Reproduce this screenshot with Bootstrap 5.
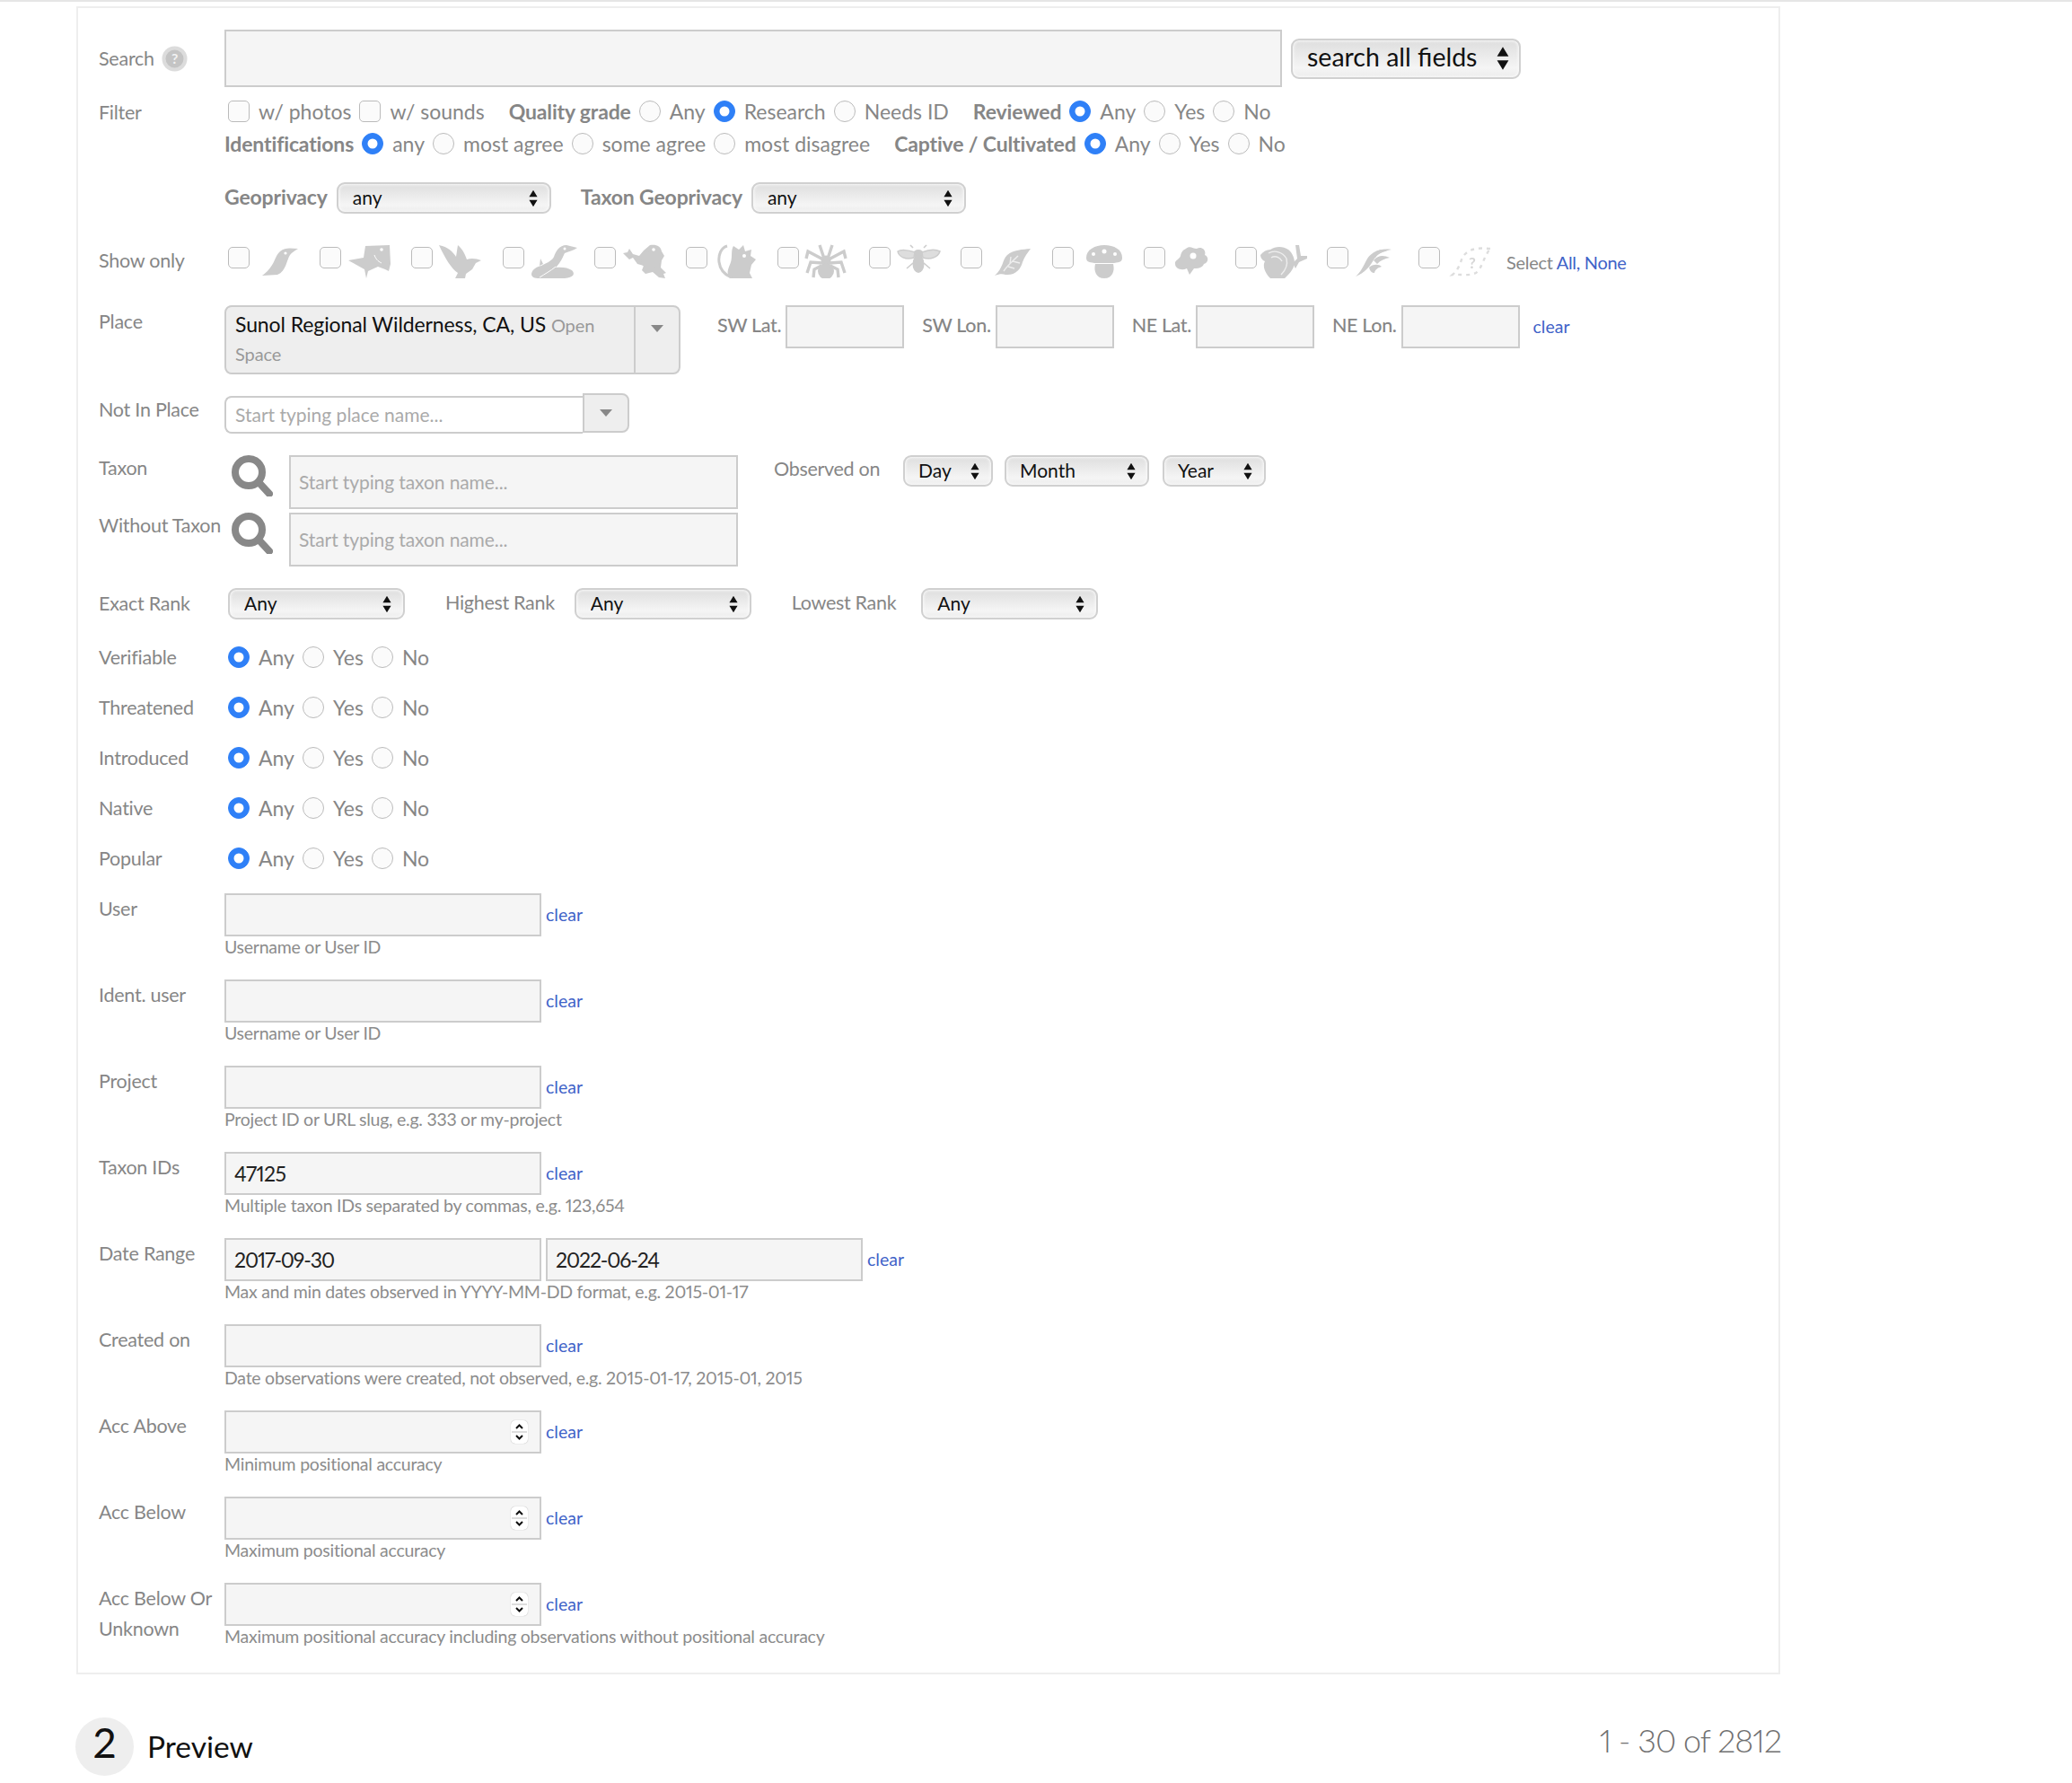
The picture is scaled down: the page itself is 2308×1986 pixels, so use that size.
<!DOCTYPE html>
<html lang="en">
<head>
    <meta charset="UTF-8">
    <title>Identify - Filters</title>
    <link href="https://cdn.jsdelivr.net/npm/bootstrap@5.3.0/dist/css/bootstrap.min.css" rel="stylesheet">
    <style>
        body {
            font-family: "Lato", "Liberation Sans", sans-serif;
            font-size: 23px;
            font-variant-numeric: proportional-nums;
            font-variant-ligatures: none;
            color: #868686;
            background: #fff;
            border-top: 2px solid #e6e6e6;
        }
        .filter-panel {
            width: 1898px;
            height: 1858px;
            margin: 5px 0 0 85px;
            border: 2px solid #eee;
            padding: 24px 0 0 23px;
        }
        .fld-lab { width: 140px; flex: none; font-size: 21.5px; line-height: 36px; letter-spacing: -.25px; }
        .wide-lab { width: 144px; }
        .txt-in {
            height: 48px;
            width: 132px;
            background: #f5f5f5;
            border: 2px solid #ccc;
            border-radius: 0;
            padding: 0 9px;
            font-size: 23px;
            color: #222;
            box-shadow: none;
            font-variant-numeric: proportional-nums;
        }
        .txt-in::placeholder { color: #aaa; font-size: 21px; letter-spacing: -.1px; }
        .id-val { letter-spacing: -.6px; }
        .date-val { letter-spacing: -1.1px; }
        .search-main { width: 1178px; height: 64px; }
        .sel-in {
            height: 35px;
            width: 197px;
            padding: 0 0 2px 16px;
            font-size: 21px;
            line-height: 29px;
            color: #111;
            border: 2px solid #d0d0d0;
            border-radius: 9px;
            background-color: #ececec;
            background-image: url("data:image/svg+xml,%3Csvg xmlns='http://www.w3.org/2000/svg' viewBox='0 0 12 24'%3E%3Cpath d='M6 1l5.5 9H.5zM6 23l-5.500-9h11z' fill='%23111'/%3E%3C/svg%3E"), linear-gradient(#dedede, #f5f5f5 75%, #ececec);
            background-repeat: no-repeat;
            background-position: right 13px center, 0 0;
            background-size: 10px 20px, 100% 100%;
            box-shadow: inset 0 0 3px 1px #fafafa;
        }
        .sel-big { width: 256px; height: 45px; margin-left: 10px; font-size: 28.5px; line-height: 37px; padding-bottom: 4px; background-position: right 11px center, 0 0; background-size: 14px 28px, 100% 100%; }
        .sel-geo { width: 239px; }
        .bold-lab { font-weight: 700; font-size: 23px; letter-spacing: -.15px; }
        .group-gap { margin-left: 18px; }
        .form-check-input.opt-in {
            width: 24px;
            height: 24px;
            margin: 0 10px 0 0;
            flex: none;
            border: 1px solid #bbb;
            background-color: #fbfbfb;
        }
        .form-check-input.opt-in[type=checkbox] { border-radius: 5px; }
        .form-check-input.opt-in:checked { background-color: #2f80f7; border-color: #2f80f7; }
        .form-check-input.first-check { margin-left: 4px; }
        .opt-txt { margin-right: 9px; white-space: nowrap; }
        .line-36 { height: 36px; }
        .filter-line-wrap { margin-top: 10px; }
        .line-36 { position: relative; top: -1px; }
        .geo-row { margin-top: 24px; height: 35px; padding-left: 140px; }
        .geo-row .sel-geo { margin-left: 10px; }
        .geo-row .bold-lab { position: relative; top: -1px; }
        .geo-second { margin-left: 33px; }
        .show-row { margin-top: 34px; height: 38px; }
        .show-list { margin-left: 4px; }
        .show-cell { width: 102px; flex: none; display: flex; }
        .show-cell .form-check-input.opt-in { margin: 3px 4px 0 0; }
        .show-cell svg { width: 62px; height: 38px; filter: blur(.5px); }
        .show-lab { margin-top: -3px; }
        .sel-links { font-size: 20px; margin: 1px 0 0 -4px; white-space: nowrap; letter-spacing: -.3px; }
        a { color: #3f63c8; text-decoration: none; }
        .place-row { margin-top: 30px; height: 77px; }
        .place-box {
            width: 508px;
            height: 77px;
            background: #eee;
            border: 2px solid #ccc;
            border-radius: 8px;
        }
        .place-txt { width: 456px; padding: 4px 0 0 10px; line-height: 31px; color: #111; border-right: 2px solid #ccc; letter-spacing: -.1px; }
        .place-txt small { color: #999; font-size: 20px; }
        .caret-mark { width: 0; height: 0; border-left: 7px solid transparent; border-right: 7px solid transparent; border-top: 8px solid #888; }
        .caret-cell { flex: 1; padding-top: 20px; }
        .coord-lab { margin: -1px 5px 0 20px; line-height: 46px; font-size: 21.5px; font-weight: 500; letter-spacing: -.35px; }
        .coord-lab.first { margin-left: 41px; }
        .not-row { margin-top: 21px; height: 45px; }
        .not-in {
            width: 399px;
            height: 42px;
            margin-top: 3px;
            padding: 0 10px 2px;
            background: #fff;
            border: 2px solid #ccc;
            border-right: 0;
            border-radius: 8px 0 0 8px;
            font-size: 21px;
        }
        .not-in::placeholder { color: #aaa; }
        .not-btn { width: 52px; height: 44px; background: #eee; border: 2px solid #ccc; border-radius: 0 8px 8px 0; }
        .taxon-wrap { margin-top: 24px; height: 125px; }
        .taxon-line { height: 61px; margin-bottom: 3px; }
        .taxon-line .fld-lab { margin-top: -4px; }
        .taxon-line svg { width: 46px; height: 46px; margin: 0 0 0 8px; flex: none; }
        .taxon-in { width: 500px; height: 60px; margin-left: 18px; padding-bottom: 2px; }
        .obs-block { margin-left: 40px; height: 35px; }
        .obs-block .sel-in { padding-left: 15px; }
        .obs-lab { width: 144px; font-size: 21.5px; letter-spacing: -.3px; position: relative; top: -2px; }
        .w-day { width: 100px; }
        .w-month { width: 161px; margin-left: 13px; }
        .w-year { width: 115px; margin-left: 15px; }
        .rank-row { margin-top: 23px; height: 35px; }
        .rank-gap { margin: -2px 22px 0 45px; font-size: 21.5px; letter-spacing: -.3px; }
        .rank-gap-low { margin-right: 28px; }
        .rank-row .fld-lab { margin-top: -2px; }
        .radio-first { margin-top: 14px; }
        .radio-row { height: 56px; }
        .radio-row > .fld-lab { width: 144px; }
        .inputs-first { margin-top: 11px; }
        .text-row { height: 96px; }
        .text-row .txt-in { width: 353px; }
        .text-row .fld-lab { line-height: 34px; }
        .date-end { margin-left: 5px; }
        .clear-lnk { margin-left: 5px; font-size: 19.5px; line-height: 47px; }
        .clear-lnk.place-clear { margin-left: 15px; }
        .help-txt { font-size: 19.5px; line-height: 24px; color: #8c8c8c; white-space: nowrap; letter-spacing: -.25px; }
        .spin-wrap { position: relative; }
        .spin-mark { position: absolute; right: 15px; top: 11px; width: 19px; height: 26px; background: #fff; border-radius: 5px; box-shadow: 0 0 1px #999; line-height: 0; }
        .preview-row { width: 1900px; margin: 48px 0 0 84px; height: 65px; }
        .step-num { width: 65px; height: 65px; border-radius: 50%; background: #eee; color: #111; font-size: 46px; line-height: 56px; text-align: center; }
        .step-name { font-size: 33.5px; color: #111; margin-left: 15px; }
        .count-txt { font-size: 36px; font-weight: 300; color: #707070; margin-top: -15px; letter-spacing: -1px; }
    </style>
</head>
<body>
    <div class="filter-panel">
        <!-- search -->
        <div class="d-flex align-items-center">
            <div class="fld-lab d-flex align-items-center gap-2">Search
                <svg width="29" height="29" viewBox="0 0 29 29"><circle cx="14.5" cy="14.5" r="14" fill="#dcdcdc"/><circle cx="14.5" cy="14.500" r="10" fill="#c4c4c4"/><text x="14.500" y="20" font-size="16" font-weight="700" text-anchor="middle" fill="#f2f2f2">?</text></svg>
            </div>
            <input class="form-control txt-in search-main">
            <select class="form-select sel-in sel-big"><option>search all fields</option></select>
        </div>

        <!-- filter -->
        <div class="d-flex filter-line-wrap">
            <div class="fld-lab">Filter</div>
            <div>
                <div class="d-flex align-items-center line-36">
                    <input class="form-check-input opt-in first-check" type="checkbox"><span class="opt-txt">w/ photos</span>
                    <input class="form-check-input opt-in" type="checkbox"><span class="opt-txt">w/ sounds</span>
                    <span class="opt-txt bold-lab group-gap">Quality grade</span>
                    <input class="form-check-input opt-in" type="radio" name="qg"><span class="opt-txt">Any</span>
                    <input class="form-check-input opt-in" type="radio" name="qg" checked><span class="opt-txt">Research</span>
                    <input class="form-check-input opt-in" type="radio" name="qg"><span class="opt-txt">Needs ID</span>
                    <span class="opt-txt bold-lab group-gap">Reviewed</span>
                    <input class="form-check-input opt-in" type="radio" name="rv" checked><span class="opt-txt">Any</span>
                    <input class="form-check-input opt-in" type="radio" name="rv"><span class="opt-txt">Yes</span>
                    <input class="form-check-input opt-in" type="radio" name="rv"><span class="opt-txt">No</span>
                </div>
                <div class="d-flex align-items-center line-36">
                    <span class="opt-txt bold-lab">Identifications</span>
                    <input class="form-check-input opt-in" type="radio" name="ids" checked><span class="opt-txt">any</span>
                    <input class="form-check-input opt-in" type="radio" name="ids"><span class="opt-txt">most agree</span>
                    <input class="form-check-input opt-in" type="radio" name="ids"><span class="opt-txt">some agree</span>
                    <input class="form-check-input opt-in" type="radio" name="ids"><span class="opt-txt">most disagree</span>
                    <span class="opt-txt bold-lab group-gap">Captive / Cultivated</span>
                    <input class="form-check-input opt-in" type="radio" name="cc" checked><span class="opt-txt">Any</span>
                    <input class="form-check-input opt-in" type="radio" name="cc"><span class="opt-txt">Yes</span>
                    <input class="form-check-input opt-in" type="radio" name="cc"><span class="opt-txt">No</span>
                </div>
            </div>
        </div>

        <div class="d-flex align-items-center geo-row">
            <span class="bold-lab">Geoprivacy</span>
            <select class="form-select sel-in sel-geo"><option>any</option></select>
            <span class="bold-lab geo-second">Taxon Geoprivacy</span>
            <select class="form-select sel-in sel-geo"><option>any</option></select>
        </div>

        <!-- show only -->
        <div class="d-flex align-items-center show-row">
            <div class="fld-lab show-lab">Show only</div>
            <div class="d-flex show-list">
                <div class="show-cell"><input class="form-check-input opt-in" type="checkbox">
                    <svg viewBox="-3 0 62 38" fill="#ccc"><path d="M47 5C40 5 33 3 27 8 20 14 22 24 7 35L24 34C34 30 34 18 38 12 40 9 44 7 47 5Z"/><circle cx="33" cy="10" r="1.6" fill="#fff"/></svg></div>
                <div class="show-cell"><input class="form-check-input opt-in" type="checkbox">
                    <svg viewBox="-3 0 62 38" fill="#ccc"><path d="M20 2L47 1 48 22 46 30 42 28 34 25 23 30 21 38 19 28 1 18 18 15Z"/><circle cx="38" cy="6" r="1.8" fill="#fff"/><path d="M30 12C32 18 36 20 38 21" stroke="#fff" fill="none"/></svg></div>
                <div class="show-cell"><input class="form-check-input opt-in" type="checkbox">
                    <svg viewBox="-3 0 62 38" fill="#ccc"><path d="M0 1C10 3 15 8 19 14L21 1C27 6 29 12 31 17 36 15 42 16 47 18L41 21 37 28 30 33 29 38 18 38 21 32C14 28 6 14 0 1Z"/></svg></div>
                <div class="show-cell"><input class="form-check-input opt-in" type="checkbox">
                    <svg viewBox="-3 0 62 38" fill="#ccc"><path d="M52 4L40 1C32 1 28 8 26 14 24 18 20 20 12 24 4 26 1 30 1 34 2 38 6 38 12 38L38 38C48 37 50 33 46 29 42 26 34 25 28 26 34 20 36 14 38 10 42 8 48 7 52 4Z"/><circle cx="38" cy="5" r="1.5" fill="#fff"/><path d="M28 25C22 30 16 33 10 37" stroke="#fff" fill="none"/><path d="M10 24L11 16 14 22Z"/></svg></div>
                <div class="show-cell"><input class="form-check-input opt-in" type="checkbox">
                    <svg viewBox="-3 0 62 38" fill="#ccc"><path d="M31 1C38 0 43 2 44 8L47 13 44 18 43 26 49 32 46 33 48 38 41 37 34 31 26 33 22 29 24 24 17 22 12 15 8 17 1 10 6 9 8 5 12 11 19 13 24 7Z"/><ellipse cx="32" cy="18" rx="11" ry="10"/><circle cx="35" cy="6" r="1.8" fill="#fff"/></svg></div>
                <div class="show-cell"><input class="form-check-input opt-in" type="checkbox">
                    <svg viewBox="-3 0 62 38" fill="#ccc"><path d="M22 2L28 6 33 1 35 8 42 6 41 13 47 17 42 23 40 32 43 38 18 38C13 32 17 26 19 20 21 14 19 6 22 2Z"/><path d="M15 2C8 4 5 12 6 20 7 28 12 34 20 37" fill="none" stroke="#ccc" stroke-width="3"/><circle cx="34" cy="13" r="2" fill="#fff"/></svg></div>
                <div class="show-cell"><input class="form-check-input opt-in" type="checkbox">
                    <svg viewBox="-3 0 62 38" fill="#ccc"><ellipse cx="23" cy="18" rx="5.5" ry="5.5"/><ellipse cx="23" cy="30" rx="9" ry="9"/><path d="M21 16L16 1M25 16L30 1M20 17L3 8 1 16M26 17L43 8 45 16M19 21L6 20 2 32M27 21L40 20 44 32M18 24L10 28 9 37M28 24L36 28 37 37" stroke="#ccc" stroke-width="3.4" fill="none"/></svg></div>
                <div class="show-cell"><input class="form-check-input opt-in" type="checkbox">
                    <svg viewBox="-3 0 62 38" fill="#ccc"><ellipse cx="24" cy="11" rx="6" ry="5"/><ellipse cx="24" cy="22" rx="6.5" ry="10"/><path d="M20 9C12 6 4 6 1 8 2 14 10 18 19 15ZM28 9C36 6 44 6 48 8 46 14 38 18 29 15Z" fill="#ddd" stroke="#ccc" stroke-width="1.5"/><path d="M18 21L11 27M30 21L37 27M18 4L15 1M30 4L33 1" stroke="#ccc" stroke-width="1.6"/></svg></div>
                <div class="show-cell"><input class="form-check-input opt-in" type="checkbox">
                    <svg viewBox="-3 0 62 38" fill="#ccc"><path d="M47 5C38 6 28 6 21 12 15 18 17 26 7 35 12 33 16 33 19 34 30 35 36 28 38 20 40 14 44 9 47 5Z"/><path d="M17 30C21 24 26 20 33 13M24 22L25 14M27 19L35 21M22 25L29 27" stroke="#eee" stroke-width="1.4" fill="none"/></svg></div>
                <div class="show-cell"><input class="form-check-input opt-in" type="checkbox">
                    <svg viewBox="-3 0 62 38" fill="#ccc"><path d="M7 15C7 6 17 1 27 1 38 1 47 6 47 15 47 19 45 20 38 21H16C9 20 7 19 7 15Z"/><path d="M17 22H37C39 30 36 38 27 38 18 38 15 30 17 22Z"/><circle cx="27" cy="8" r="2.5" fill="#fff"/><circle cx="15" cy="11" r="2" fill="#fff"/><circle cx="39" cy="11" r="2" fill="#fff"/></svg></div>
                <div class="show-cell"><input class="form-check-input opt-in" type="checkbox">
                    <svg viewBox="-3 0 62 38" fill="#ccc"><path d="M16 5C20 1 24 5 28 5 33 2 39 6 37 12 42 14 41 21 36 22 34 27 28 27 25 27L20 34 17 27C11 30 4 27 4 22 3 18 9 17 10 13 11 9 12 7 16 5Z"/><circle cx="24" cy="13" r="3.5" fill="#fff"/></svg></div>
                <div class="show-cell"><input class="form-check-input opt-in" type="checkbox">
                    <svg viewBox="-3 0 62 38" fill="#ccc"><path d="M-3 12C0 8 4 6 8 6 14 2 22 2 28 6 33 10 35 16 35 21 34 29 28 34 24 38H8C2 32-1 24 2 19-1 18-3 15-3 12Z"/><path d="M33 21L38 16 36 1 40 1 42 13 49 13 49 16 40 20 36 27Z"/><path d="M6 10C13 6 22 9 26 16 28 24 24 30 20 34M9 15C14 12 19 15 21 19" stroke="#eee" stroke-width="1.4" fill="none"/></svg></div>
                <div class="show-cell"><input class="form-check-input opt-in" type="checkbox">
                    <svg viewBox="-3 0 62 38" fill="#ccc"><path d="M1 36C6 32 10 24 13 18 17 10 27 4 41 6 34 7 26 10 22 16 18 22 15 30 1 36Z"/><path d="M20 12C24 6 32 4 36 8 31 8 26 10 23 15ZM21 18C26 12 32 12 39 15 33 16 29 18 25 22ZM16 26C20 22 27 22 30 25 26 26 23 28 22 32 19 32 17 30 16 26Z"/></svg></div>
                <div class="show-cell"><input class="form-check-input opt-in" type="checkbox">
                    <svg viewBox="-3 0 62 38" fill="none"><path d="M49 5C38 4 28 4 21 11 15 17 17 25 7 34 14 33 24 36 33 32 40 27 41 15 49 5Z" stroke="#ddd" stroke-width="2.4" stroke-dasharray="4 5"/><text x="29" y="27" font-size="17" font-weight="700" text-anchor="middle" fill="#d6d6d6">?</text></svg></div>
            </div>
            <div class="sel-links">Select <a href="#">All, None</a></div>
        </div>

        <!-- place -->
        <div class="d-flex place-row">
            <div class="fld-lab">Place</div>
            <div class="place-box d-flex">
                <div class="place-txt">Sunol Regional Wilderness, CA, US <small>Open</small> <small>Space</small></div>
                <div class="caret-cell d-flex justify-content-center"><span class="caret-mark"></span></div>
            </div>
            <span class="coord-lab first">SW Lat.</span><input class="form-control txt-in">
            <span class="coord-lab">SW Lon.</span><input class="form-control txt-in">
            <span class="coord-lab">NE Lat.</span><input class="form-control txt-in">
            <span class="coord-lab">NE Lon.</span><input class="form-control txt-in">
            <a href="#" class="clear-lnk place-clear">clear</a>
        </div>

        <div class="d-flex not-row">
            <div class="fld-lab">Not In Place</div>
            <input class="form-control not-in" placeholder="Start typing place name...">
            <div class="not-btn d-flex align-items-center justify-content-center"><span class="caret-mark"></span></div>
        </div>

        <!-- taxon and observed on -->
        <div class="d-flex taxon-wrap">
            <div>
                <div class="d-flex taxon-line">
                    <div class="fld-lab">Taxon</div>
                    <svg viewBox="0 0 46 46" fill="none" stroke="#888"><circle cx="19" cy="19" r="15" stroke-width="8"/><path d="M30 30L42 43" stroke-width="8" stroke-linecap="round"/></svg>
                    <input class="form-control txt-in taxon-in" placeholder="Start typing taxon name...">
                </div>
                <div class="d-flex taxon-line">
                    <div class="fld-lab">Without Taxon</div>
                    <svg viewBox="0 0 46 46" fill="none" stroke="#888"><circle cx="19" cy="19" r="15" stroke-width="8"/><path d="M30 30L42 43" stroke-width="8" stroke-linecap="round"/></svg>
                    <input class="form-control txt-in taxon-in" placeholder="Start typing taxon name...">
                </div>
            </div>
            <div class="d-flex obs-block align-items-center">
                <span class="obs-lab">Observed on</span>
                <select class="form-select sel-in w-day"><option>Day</option></select>
                <select class="form-select sel-in w-month"><option>Month</option></select>
                <select class="form-select sel-in w-year"><option>Year</option></select>
            </div>
        </div>

        <!-- ranks -->
        <div class="d-flex align-items-center rank-row">
            <div class="fld-lab wide-lab">Exact Rank</div>
            <select class="form-select sel-in"><option>Any</option></select>
            <span class="rank-gap">Highest Rank</span>
            <select class="form-select sel-in"><option>Any</option></select>
            <span class="rank-gap rank-gap-low">Lowest Rank</span>
            <select class="form-select sel-in"><option>Any</option></select>
        </div>

        <!-- yes/no rows -->
        <div class="radio-first">
            <div class="d-flex align-items-center radio-row"><div class="fld-lab">Verifiable</div>
                <input class="form-check-input opt-in" type="radio" name="r1" checked><span class="opt-txt">Any</span>
                <input class="form-check-input opt-in" type="radio" name="r1"><span class="opt-txt">Yes</span>
                <input class="form-check-input opt-in" type="radio" name="r1"><span class="opt-txt">No</span></div>
            <div class="d-flex align-items-center radio-row"><div class="fld-lab">Threatened</div>
                <input class="form-check-input opt-in" type="radio" name="r2" checked><span class="opt-txt">Any</span>
                <input class="form-check-input opt-in" type="radio" name="r2"><span class="opt-txt">Yes</span>
                <input class="form-check-input opt-in" type="radio" name="r2"><span class="opt-txt">No</span></div>
            <div class="d-flex align-items-center radio-row"><div class="fld-lab">Introduced</div>
                <input class="form-check-input opt-in" type="radio" name="r3" checked><span class="opt-txt">Any</span>
                <input class="form-check-input opt-in" type="radio" name="r3"><span class="opt-txt">Yes</span>
                <input class="form-check-input opt-in" type="radio" name="r3"><span class="opt-txt">No</span></div>
            <div class="d-flex align-items-center radio-row"><div class="fld-lab">Native</div>
                <input class="form-check-input opt-in" type="radio" name="r4" checked><span class="opt-txt">Any</span>
                <input class="form-check-input opt-in" type="radio" name="r4"><span class="opt-txt">Yes</span>
                <input class="form-check-input opt-in" type="radio" name="r4"><span class="opt-txt">No</span></div>
            <div class="d-flex align-items-center radio-row"><div class="fld-lab">Popular</div>
                <input class="form-check-input opt-in" type="radio" name="r5" checked><span class="opt-txt">Any</span>
                <input class="form-check-input opt-in" type="radio" name="r5"><span class="opt-txt">Yes</span>
                <input class="form-check-input opt-in" type="radio" name="r5"><span class="opt-txt">No</span></div>
        </div>

        <!-- text fields -->
        <div class="inputs-first">
            <div class="d-flex text-row"><div class="fld-lab">User</div><div>
                <div class="d-flex"><input class="form-control txt-in"><a href="#" class="clear-lnk">clear</a></div>
                <div class="help-txt">Username or User ID</div></div></div>
            <div class="d-flex text-row"><div class="fld-lab">Ident. user</div><div>
                <div class="d-flex"><input class="form-control txt-in"><a href="#" class="clear-lnk">clear</a></div>
                <div class="help-txt">Username or User ID</div></div></div>
            <div class="d-flex text-row"><div class="fld-lab">Project</div><div>
                <div class="d-flex"><input class="form-control txt-in"><a href="#" class="clear-lnk">clear</a></div>
                <div class="help-txt">Project ID or URL slug, e.g. 333 or my-project</div></div></div>
            <div class="d-flex text-row"><div class="fld-lab">Taxon IDs</div><div>
                <div class="d-flex"><input class="form-control txt-in id-val" value="47125"><a href="#" class="clear-lnk">clear</a></div>
                <div class="help-txt">Multiple taxon IDs separated by commas, e.g. 123,654</div></div></div>
            <div class="d-flex text-row"><div class="fld-lab">Date Range</div><div>
                <div class="d-flex"><input class="form-control txt-in date-val" value="2017-09-30"><input class="form-control txt-in date-val date-end" value="2022-06-24"><a href="#" class="clear-lnk">clear</a></div>
                <div class="help-txt">Max and min dates observed in YYYY-MM-DD format, e.g. 2015-01-17</div></div></div>
            <div class="d-flex text-row"><div class="fld-lab">Created on</div><div>
                <div class="d-flex"><input class="form-control txt-in"><a href="#" class="clear-lnk">clear</a></div>
                <div class="help-txt">Date observations were created, not observed, e.g. 2015-01-17, 2015-01, 2015</div></div></div>
            <div class="d-flex text-row"><div class="fld-lab">Acc Above</div><div>
                <div class="d-flex"><div class="spin-wrap"><input class="form-control txt-in"><span class="spin-mark"><svg width="19" height="26" viewBox="0 0 19 26" fill="none" stroke="#111" stroke-width="2"><path d="M6 9l3.5-3.5L13 9M6 17l3.5 3.500L13 17"/><path d="M1 13h17" stroke="#ddd"/></svg></span></div><a href="#" class="clear-lnk">clear</a></div>
                <div class="help-txt">Minimum positional accuracy</div></div></div>
            <div class="d-flex text-row"><div class="fld-lab">Acc Below</div><div>
                <div class="d-flex"><div class="spin-wrap"><input class="form-control txt-in"><span class="spin-mark"><svg width="19" height="26" viewBox="0 0 19 26" fill="none" stroke="#111" stroke-width="2"><path d="M6 9l3.5-3.5L13 9M6 17l3.5 3.500L13 17"/><path d="M1 13h17" stroke="#ddd"/></svg></span></div><a href="#" class="clear-lnk">clear</a></div>
                <div class="help-txt">Maximum positional accuracy</div></div></div>
            <div class="d-flex text-row"><div class="fld-lab">Acc Below Or Unknown</div><div>
                <div class="d-flex"><div class="spin-wrap"><input class="form-control txt-in"><span class="spin-mark"><svg width="19" height="26" viewBox="0 0 19 26" fill="none" stroke="#111" stroke-width="2"><path d="M6 9l3.5-3.5L13 9M6 17l3.5 3.500L13 17"/><path d="M1 13h17" stroke="#ddd"/></svg></span></div><a href="#" class="clear-lnk">clear</a></div>
                <div class="help-txt">Maximum positional accuracy including observations without positional accuracy</div></div></div>
        </div>
    </div>

    <div class="d-flex justify-content-between align-items-center preview-row">
        <div class="d-flex align-items-center">
            <div class="step-num">2</div>
            <div class="step-name">Preview</div>
        </div>
        <div class="count-txt">1 - 30 of 2812</div>
    </div>

    <script src="https://cdn.jsdelivr.net/npm/bootstrap@5.3.0/dist/js/bootstrap.bundle.min.js"></script>
</body>
</html>
